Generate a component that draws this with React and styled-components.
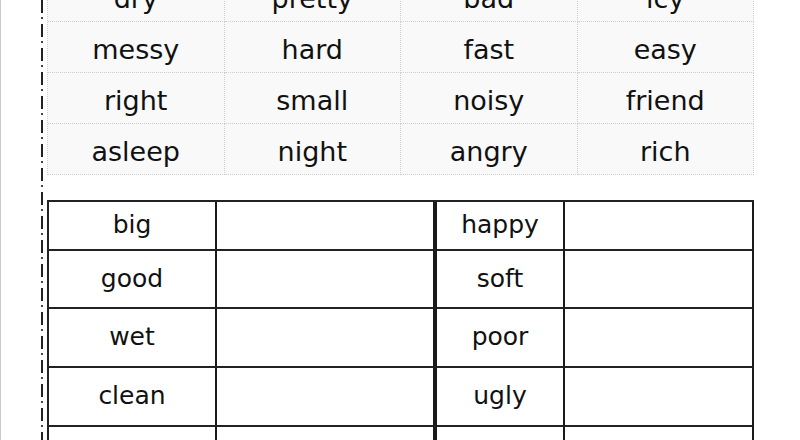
import React from "react";
import styled, { createGlobalStyle } from "styled-components";

const GlobalStyle = createGlobalStyle`
  html, body {
    margin: 0;
    padding: 0;
    background: #fff;
  }
  body {
    font-family: "DejaVu Sans", "Liberation Sans", sans-serif;
    color: #111;
    overflow: hidden;
  }
`;

const bank = [
  ["dry", "pretty", "bad", "icy"],
  ["messy", "hard", "fast", "easy"],
  ["right", "small", "noisy", "friend"],
  ["asleep", "night", "angry", "rich"],
];

const pairs = [
  ["big", "happy"],
  ["good", "soft"],
  ["wet", "poor"],
  ["clean", "ugly"],
  ["", ""],
];

const rowHeights = [49, 58, 59, 59, 58];

const Page = styled.div`
  display: flex;
  height: 440px;
  overflow: hidden;
  border-left: 1px solid #c9c9c9;
  padding-left: 40px;
`;

// dash-dot cutting line down the margin
const CutLine = styled.div`
  width: 2px;
  flex-shrink: 0;
  background: repeating-linear-gradient(
    to bottom,
    #222 0px,
    #222 13px,
    transparent 13px,
    transparent 17px,
    #444 17px,
    #444 19px,
    transparent 19px,
    transparent 24px
  );
`;

const Sheet = styled.div`
  display: flex;
  flex-direction: column;
  margin-left: 4px;
  margin-top: -30px;
  gap: 25px;
`;

const WordBank = styled.div`
  display: grid;
  grid-template-columns: repeat(4, 176.5px);
  grid-auto-rows: 51px;
  background: #f9f9f9;
  border-top: 1px dotted #cfcfcf;
  border-left: 1px dotted #cfcfcf;
`;

const BankCell = styled.div`
  box-sizing: border-box;
  display: flex;
  align-items: center;
  justify-content: center;
  padding-top: 4px;
  border-right: 1px dotted #cfcfcf;
  border-bottom: 1px dotted #cfcfcf;
  font-size: 27px;
  color: #111;
`;

const Answers = styled.div`
  display: grid;
  grid-template-columns: 168px 220px 128px 189px;
  border-top: 2px solid #222;
  border-left: 2px solid #222;
  width: max-content;
`;

const Cell = styled.div`
  box-sizing: border-box;
  display: flex;
  align-items: center;
  justify-content: center;
  height: ${(p) => p.$h}px;
  border-bottom: 2px solid #222;
  border-right: ${(p) => (p.$thick ? "4px" : "2px")} solid #1a1a1a;
  font-size: 25px;
  padding-bottom: 2px;
`;

export default function App() {
  return (
    <>
      <GlobalStyle />
      <Page>
        <CutLine />
        <Sheet>
          <WordBank>
            {bank.flat().map((w, i) => (
              <BankCell key={i}>{w}</BankCell>
            ))}
          </WordBank>
          <Answers>
            {pairs.map(([a, b], i) => (
              <React.Fragment key={i}>
                <Cell $h={rowHeights[i]}>{a}</Cell>
                <Cell $h={rowHeights[i]} $thick />
                <Cell $h={rowHeights[i]}>{b}</Cell>
                <Cell $h={rowHeights[i]} />
              </React.Fragment>
            ))}
          </Answers>
        </Sheet>
      </Page>
    </>
  );
}
